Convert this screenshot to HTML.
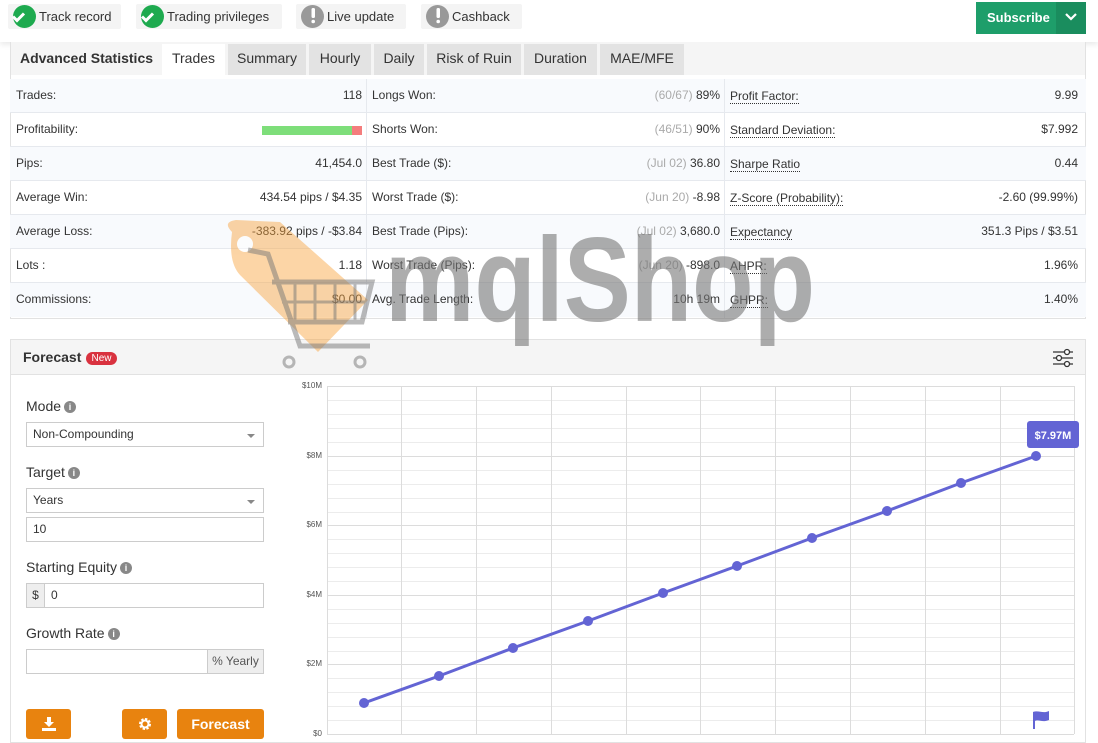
<!DOCTYPE html>
<html><head><meta charset="utf-8"><style>
*{box-sizing:border-box;margin:0;padding:0}
body{width:1098px;height:743px;overflow:hidden;background:#fff;font-family:"Liberation Sans",sans-serif;color:#333;position:relative}
.abs{position:absolute}
.badge{position:absolute;top:4px;height:25px;background:#f4f4f4;border-radius:2px;font-size:13px;line-height:25px;color:#333;padding-left:31px;white-space:nowrap}
.badge i{position:absolute;left:5px;top:1px;width:23px;height:23px;border-radius:50%;display:block}
.tab{position:absolute;top:44px;height:31px;line-height:29px;font-size:14px;text-align:center;background:#e3e3e3;color:#333}
.row{position:absolute;left:10px;width:1076px;height:34px;border-bottom:1px solid #e6e9ee;font-size:12px;line-height:33px}
.row span{position:absolute;white-space:nowrap}
.r{text-align:right}
.g{color:#aaa}
.u{border-bottom:1px dotted #333;line-height:14px;top:10px}
.lbl{position:absolute;left:26px;font-size:14px;color:#333}
.inf{display:inline-block;width:12px;height:12px;border-radius:50%;background:#888;color:#fff;font-size:9px;line-height:12px;text-align:center;font-weight:bold;vertical-align:1px;margin-left:3px}
.inp{position:absolute;left:26px;width:238px;height:25px;border:1px solid #ccc;font-size:12px;line-height:23px;padding-left:6px;background:#fff}
.btn{position:absolute;top:709px;height:30px;background:#e8830f;border-radius:3px;color:#fff;font-weight:bold;font-size:14px;text-align:center;line-height:30px}
.yl{position:absolute;left:290px;width:32px;text-align:right;font-size:8px;color:#555}
</style></head><body>
<div class="abs" style="left:0;top:0;width:1098px;height:42px;background:#fff;box-shadow:0 3px 5px rgba(0,0,0,0.08)"></div>
<div class="badge" style="left:8px;width:113px"><i style="background:#1eaa4f"></i>Track record</div>
<div class="badge" style="left:136px;width:146px"><i style="background:#1eaa4f"></i>Trading privileges</div>
<div class="badge" style="left:296px;width:110px"><i style="background:#999"></i>Live update</div>
<div class="badge" style="left:421px;width:101px"><i style="background:#999"></i>Cashback</div>
<svg class="abs" style="left:0;top:0" width="530" height="35">
<path d="M13 16.5l4 4 7-7" stroke="#fff" stroke-width="3" fill="none"/>
<path d="M142 16.5l4 4 7-7" stroke="#fff" stroke-width="3" fill="none"/>
<rect x="311.5" y="8" width="3.5" height="10" rx="1.5" fill="#fff"/><circle cx="313.2" cy="21.5" r="1.8" fill="#fff"/>
<rect x="436.5" y="8" width="3.5" height="10" rx="1.5" fill="#fff"/><circle cx="438.2" cy="21.5" r="1.8" fill="#fff"/>
</svg>
<div class="abs" style="left:976px;top:2px;width:110px;height:32px;background:#1e9e6a;color:#fff;font-weight:bold;font-size:13px;line-height:32px;padding-left:11px">Subscribe</div>
<div class="abs" style="left:1056px;top:2px;width:30px;height:32px;background:#1a8d5e"></div>
<svg class="abs" style="left:1064px;top:12px" width="14" height="10"><path d="M2 2l5 5 5-5" stroke="#fff" stroke-width="2.2" fill="none"/></svg>

<div class="abs" style="left:10px;top:42px;width:1076px;height:277px;border:1px solid #e2e2e2;border-top:none"></div>
<div class="abs" style="left:11px;top:42px;width:1074px;height:33px;background:#f5f5f5"></div>
<div class="tab" style="left:11px;width:151px;background:#f5f5f5;font-weight:bold">Advanced Statistics</div>
<div class="tab" style="left:162px;width:63px;background:#fff;height:33px">Trades</div>
<div class="tab" style="left:228px;width:78px">Summary</div>
<div class="tab" style="left:309px;width:62px">Hourly</div>
<div class="tab" style="left:374px;width:50px">Daily</div>
<div class="tab" style="left:427px;width:94px">Risk of Ruin</div>
<div class="tab" style="left:524px;width:73px">Duration</div>
<div class="tab" style="left:600px;width:84px">MAE/MFE</div>

<div class="row" style="top:79px;background:#f8fafd"><span style="left:6px">Trades:</span><span class="r" style="right:724px">118</span><span style="left:362px">Longs Won:</span><span class="r" style="right:366px"><b class="g" style="font-weight:normal">(60/67)</b> 89%</span><span class="u" style="left:720px">Profit Factor:</span><span class="r" style="right:8px">9.99</span></div>
<div class="row" style="top:113px"><span style="left:6px">Profitability:</span><span style="left:252px;top:13px;width:90px;height:9px;background:#7ede7a"></span><span style="left:342px;top:13px;width:10px;height:9px;background:#f47d7d"></span><span style="left:362px">Shorts Won:</span><span class="r" style="right:366px"><b class="g" style="font-weight:normal">(46/51)</b> 90%</span><span class="u" style="left:720px">Standard Deviation:</span><span class="r" style="right:8px">$7.992</span></div>
<div class="row" style="top:147px;background:#f8fafd"><span style="left:6px">Pips:</span><span class="r" style="right:724px">41,454.0</span><span style="left:362px">Best Trade ($):</span><span class="r" style="right:366px"><b class="g" style="font-weight:normal">(Jul 02)</b> 36.80</span><span class="u" style="left:720px">Sharpe Ratio</span><span class="r" style="right:8px">0.44</span></div>
<div class="row" style="top:181px"><span style="left:6px">Average Win:</span><span class="r" style="right:724px">434.54 pips / $4.35</span><span style="left:362px">Worst Trade ($):</span><span class="r" style="right:366px"><b class="g" style="font-weight:normal">(Jun 20)</b> -8.98</span><span class="u" style="left:720px">Z-Score (Probability):</span><span class="r" style="right:8px">-2.60 (99.99%)</span></div>
<div class="row" style="top:215px;background:#f8fafd"><span style="left:6px">Average Loss:</span><span class="r" style="right:724px">-383.92 pips / -$3.84</span><span style="left:362px">Best Trade (Pips):</span><span class="r" style="right:366px"><b class="g" style="font-weight:normal">(Jul 02)</b> 3,680.0</span><span class="u" style="left:720px">Expectancy</span><span class="r" style="right:8px">351.3 Pips / $3.51</span></div>
<div class="row" style="top:249px"><span style="left:6px">Lots :</span><span class="r" style="right:724px">1.18</span><span style="left:362px">Worst Trade (Pips):</span><span class="r" style="right:366px"><b class="g" style="font-weight:normal">(Jun 20)</b> -898.0</span><span class="u" style="left:720px">AHPR:</span><span class="r" style="right:8px">1.96%</span></div>
<div class="row" style="top:283px;background:#f8fafd;border-bottom:none"><span style="left:6px">Commissions:</span><span class="r" style="right:724px">$0.00</span><span style="left:362px">Avg. Trade Length:</span><span class="r" style="right:366px">10h 19m</span><span class="u" style="left:720px">GHPR:</span><span class="r" style="right:8px">1.40%</span></div>
<div class="abs" style="left:366px;top:79px;width:1px;height:239px;background:#e6e9ee"></div>
<div class="abs" style="left:724px;top:79px;width:1px;height:239px;background:#e6e9ee"></div>

<div class="abs" style="left:10px;top:339px;width:1076px;height:404px;border:1px solid #e2e2e2"></div>
<div class="abs" style="left:11px;top:340px;width:1074px;height:35px;background:#f5f5f5;border-bottom:1px solid #e2e2e2"></div>
<div class="abs" style="left:23px;top:349px;font-size:14px;font-weight:bold;color:#333">Forecast</div>
<div class="abs" style="left:86px;top:352px;width:31px;height:13px;border-radius:7px;background:#d9323f;color:#fff;font-size:10px;line-height:13px;text-align:center">New</div>
<svg class="abs" style="left:1051px;top:347px" width="24" height="22" stroke="#333" fill="#fff" stroke-width="1.3"><path d="M2 5h20M2 11h20M2 17h20"/><circle cx="16" cy="5" r="2.5"/><circle cx="8" cy="11" r="2.5"/><circle cx="16" cy="17" r="2.5"/></svg>

<div class="lbl" style="top:398px">Mode<span class="inf">i</span></div>
<div class="inp" style="top:422px">Non-Compounding<span style="position:absolute;right:8px;top:11px;border:4px solid transparent;border-top:4px solid #888"></span></div>
<div class="lbl" style="top:464px">Target<span class="inf">i</span></div>
<div class="inp" style="top:488px">Years<span style="position:absolute;right:8px;top:11px;border:4px solid transparent;border-top:4px solid #888"></span></div>
<div class="inp" style="top:517px">10</div>
<div class="lbl" style="top:559px">Starting Equity<span class="inf">i</span></div>
<div class="inp" style="top:583px;padding-left:24px">0<span style="position:absolute;left:0;top:0;width:18px;height:23px;background:#eee;border-right:1px solid #ccc;text-align:center">$</span></div>
<div class="lbl" style="top:625px">Growth Rate<span class="inf">i</span></div>
<div class="inp" style="top:649px"><span style="position:absolute;right:0;top:0;width:56px;height:23px;background:#eee;border-left:1px solid #ccc;text-align:center;color:#555">% Yearly</span></div>
<div class="btn" style="left:26px;width:45px">
<svg width="14" height="14" style="vertical-align:-2px" fill="#fff"><path d="M5 0h4v5h3l-5 5-5-5h3z"/><rect x="0" y="11" width="14" height="3"/></svg></div>
<div class="btn" style="left:122px;width:45px"><svg width="14" height="14" style="vertical-align:-2px"><circle cx="7" cy="7" r="4.5" fill="none" stroke="#fff" stroke-width="3" stroke-dasharray="2.2 1.3"/><circle cx="7" cy="7" r="3.5" fill="none" stroke="#fff" stroke-width="2"/></svg></div>
<div class="btn" style="left:177px;width:87px">Forecast</div>

<svg class="abs" style="left:0;top:0" width="1098" height="743">
<g stroke="#ececec" stroke-width="1">
<path d="M327 400.5H1074M327 414.5H1074M327 428.5H1074M327 442.5H1074M327 470.5H1074M327 484.5H1074M327 498.5H1074M327 512.5H1074M327 539.5H1074M327 553.5H1074M327 567.5H1074M327 581.5H1074M327 609.5H1074M327 623.5H1074M327 637.5H1074M327 651.5H1074M327 678.5H1074M327 692.5H1074M327 706.5H1074M327 720.5H1074"/>
</g>
<g stroke="#dcdcdc" stroke-width="1">
<path d="M327 386.5H1074M327 456.5H1074M327 525.5H1074M327 595.5H1074M327 664.5H1074M327 734.5H1074"/>
<path d="M327.5 386V734M401.5 386V734M476.5 386V734M551.5 386V734M626.5 386V734M700.5 386V734M775.5 386V734M850.5 386V734M925.5 386V734M1000.5 386V734M1074.5 386V734"/>
</g>
<polyline points="364,703 439,676 513,648 588,621 663,593 737,566 812,538 887,511 961,483 1036,456" fill="none" stroke="#6364d4" stroke-width="3"/>
<g fill="#6364d4"><circle cx="364" cy="703" r="5"/><circle cx="439" cy="676" r="5"/><circle cx="513" cy="648" r="5"/><circle cx="588" cy="621" r="5"/><circle cx="663" cy="593" r="5"/><circle cx="737" cy="566" r="5"/><circle cx="812" cy="538" r="5"/><circle cx="887" cy="511" r="5"/><circle cx="961" cy="483" r="5"/><circle cx="1036" cy="456" r="5"/>
<rect x="1027" y="421" width="52" height="27" rx="3"/>
<path d="M1033 712v17h2v-8c4-2 7 2 14-1v-9c-6 3-10-1-16 1z"/></g>
<text x="1053" y="439" fill="#fff" font-size="11" font-weight="bold" text-anchor="middle" font-family="Liberation Sans">$7.97M</text>
<g opacity="0.45">
<path d="M232 232 Q222 222 236 220 L280 222 L368 300 L318 352 L240 275 Q228 262 232 232Z" fill="#f8a13a"/>
<circle cx="245" cy="244" r="8" fill="#fff"/>
</g>
<g opacity="0.5" stroke="#777" fill="none" stroke-width="5">
<path d="M248 250 L268 254 L300 346 L370 346"/>
<path d="M272 282 L372 282 L362 322 L288 322"/>
<path d="M282 302 L368 302" stroke-width="3"/>
<path d="M295 282V322M315 282V322M335 282V322M355 282V322" stroke-width="3"/>
<circle cx="289" cy="362" r="5" stroke-width="3"/><circle cx="360" cy="362" r="5" stroke-width="3"/>
</g>
<text x="385" y="321" font-family="Liberation Sans" font-weight="bold" font-size="120" fill="#777" opacity="0.6" textLength="430" lengthAdjust="spacingAndGlyphs">mqlShop</text>
</svg>
<div class="yl" style="top:381px">$10M</div>
<div class="yl" style="top:451px">$8M</div>
<div class="yl" style="top:520px">$6M</div>
<div class="yl" style="top:590px">$4M</div>
<div class="yl" style="top:659px">$2M</div>
<div class="yl" style="top:729px">$0</div>
</body></html>
